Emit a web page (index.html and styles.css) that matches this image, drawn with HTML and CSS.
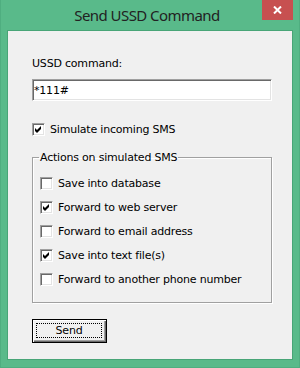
FILE: index.html
```html
<!DOCTYPE html>
<html lang="en">
<head>
  <meta charset="UTF-8">
  <title>Send USSD Command</title>
  <link rel="stylesheet" href="styles.css">
</head>
<body>

<div class="window">
  <div class="titlebar">
    <span></span>
    <span class="title">Send USSD Command</span>
    <span class="close">
      <svg width="9" height="8" viewBox="0 0 9 8">
        <path d="M1 0.5 L8 7.5 M8 0.5 L1 7.5" stroke="#fff" stroke-width="2"/>
      </svg>
    </span>
  </div>

  <div class="client">
    <div class="label">USSD command:</div>
    <input class="textbox" type="text" value="*111#">

    <div class="check-row top-check">
      <span class="box checked"><svg width="9" height="9" viewBox="0 0 9 9"><path d="M1 3 L3 5 L7 1 L7 4 L3 8 L1 6 Z"/></svg></span>
      <span>Simulate incoming SMS</span>
    </div>

    <!-- Actions group -->
    <fieldset class="group">
      <legend>Actions on simulated SMS</legend>
      <div class="check-row">
        <span class="box"></span>
        <span>Save into database</span>
      </div>
      <div class="check-row">
        <span class="box checked"><svg width="9" height="9" viewBox="0 0 9 9"><path d="M1 3 L3 5 L7 1 L7 4 L3 8 L1 6 Z"/></svg></span>
        <span>Forward to web server</span>
      </div>
      <div class="check-row">
        <span class="box"></span>
        <span>Forward to email address</span>
      </div>
      <div class="check-row">
        <span class="box checked"><svg width="9" height="9" viewBox="0 0 9 9"><path d="M1 3 L3 5 L7 1 L7 4 L3 8 L1 6 Z"/></svg></span>
        <span>Save into text file(s)</span>
      </div>
      <div class="check-row">
        <span class="box"></span>
        <span>Forward to another phone number</span>
      </div>
    </fieldset>

    <button class="btn"><span class="focus">Send</span></button>
  </div>
</div>

</body>
</html>
```

FILE: styles.css
```css
body {
  margin: 0;
  font-family: 'DejaVu Sans', sans-serif;
  font-size: 11px;
  letter-spacing: -0.2px;
}

.window {
  width: 300px;
  height: 368px;
  box-sizing: border-box;
  background-color: #59ba8a;
  border: 1px solid #4fae80;
  border-top: none;
  padding: 0 6px 7px 6px;
  display: flex;
  flex-direction: column;
}

.titlebar {
  height: 30px;
  display: grid;
  grid-template-columns: 1fr auto 1fr;
  margin: 0 -6px;
  padding-right: 6px;
}

.title {
  font-family: 'Noto Sans', sans-serif;
  font-size: 15px;
  letter-spacing: -0.55px;
  color: #222;
  line-height: 30px;
  white-space: nowrap;
}

.close {
  justify-self: end;
  width: 31px;
  height: 20px;
  background-color: #c75050;
  display: flex;
  align-items: center;
  justify-content: center;
}

.client {
  flex: 1;
  background-color: #f0f0f0;
  border: 1px solid #48a577;
  padding: 26px 19px 0 24px;
  color: #000;
}

.label {
  line-height: 13px;
  height: 13px;
}

.textbox {
  display: block;
  box-sizing: border-box;
  width: 240px;
  height: 22px;
  margin: 9px 0 0 0;
  padding: 0 0 0 1px;
  border-style: solid;
  border-width: 1px;
  border-color: #a0a0a0 #ffffff #ffffff #a0a0a0;
  box-shadow: inset 1px 1px 0 #696969, inset -1px -1px 0 #e3e3e3;
  background: #fff;
  font-family: 'DejaVu Sans', sans-serif;
  font-size: 11px;
  letter-spacing: -0.2px;
  color: #000;
  outline: none;
}

.check-row {
  display: flex;
  align-items: center;
  gap: 5px;
  height: 13px;
  line-height: 13px;
  white-space: nowrap;
}

.top-check {
  margin-top: 22px;
}

.box {
  width: 13px;
  height: 13px;
  box-sizing: border-box;
  flex: none;
  background: #fff;
  border-style: solid;
  border-width: 1px;
  border-color: #a0a0a0 #ffffff #ffffff #a0a0a0;
  box-shadow: inset 1px 1px 0 #696969, inset -1px -1px 0 #e3e3e3;
  padding: 1px 0 0 1px;
}

.box svg {
  display: block;
  fill: #000;
}

.group {
  margin: 15px 0 0 0;
  width: 240px;
  box-sizing: border-box;
  padding: 13px 0 16px 7px;
  border: 1px solid #a0a0a0;
  box-shadow: 1px 1px 0 #fff, inset 1px 1px 0 #fff;
  display: flex;
  flex-direction: column;
  gap: 11px;
}

.group legend {
  padding: 0 1px;
  margin-left: -1px;
  line-height: 13px;
}

.btn {
  margin-top: 16px;
  width: 75px;
  height: 24px;
  padding: 0;
  display: flex;
  background: #f0f0f0;
  border: 1px solid #000;
  box-shadow: inset 1px 1px 0 #fff, inset -1px -1px 0 #696969, inset -2px -2px 0 #a0a0a0;
  font-family: 'DejaVu Sans', sans-serif;
  font-size: 11px;
  letter-spacing: -0.2px;
  color: #000;
}

.focus {
  flex: 1;
  margin: 3px 4px 4px 3px;
  border: 1px dotted #000;
  display: flex;
  align-items: center;
  justify-content: center;
}
```
